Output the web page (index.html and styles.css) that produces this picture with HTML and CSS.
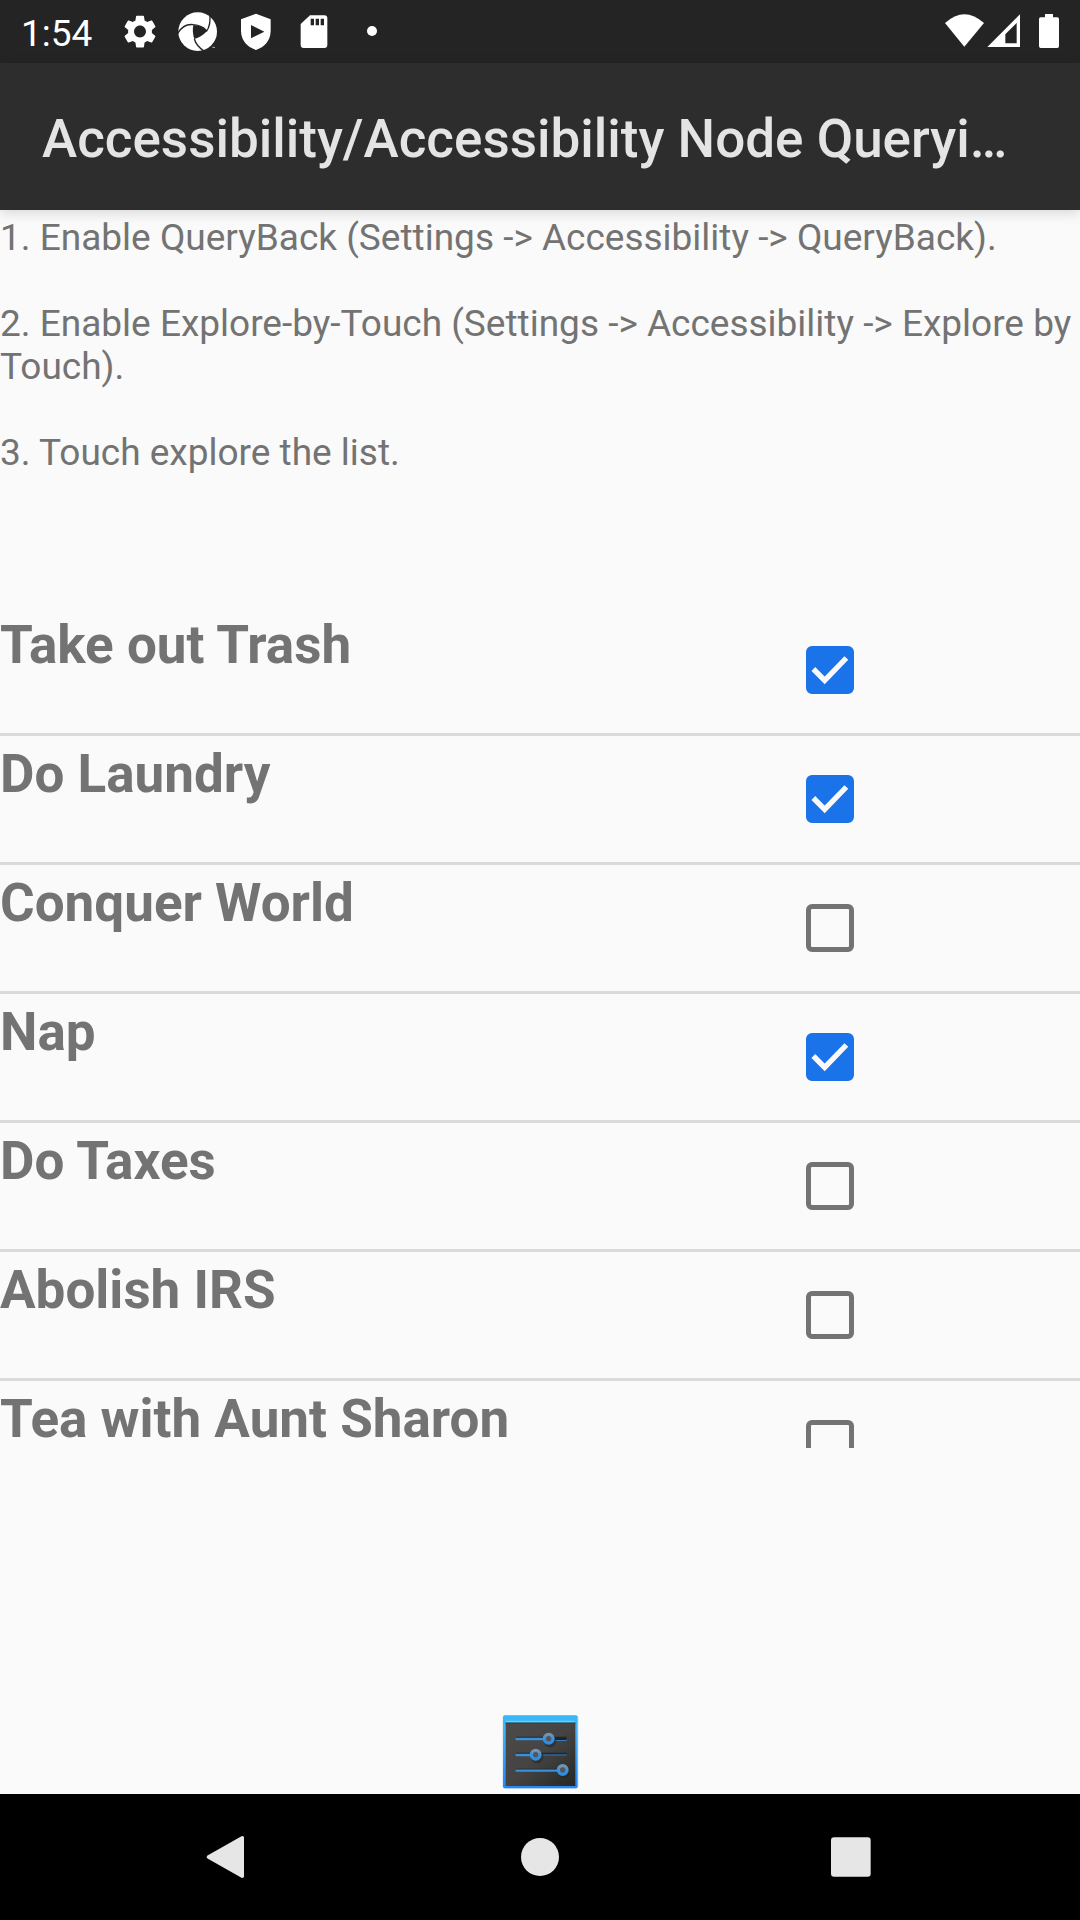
FILE: index.html
```html
<!DOCTYPE html>
<html lang="en">
<head>
<meta charset="utf-8">
<meta name="viewport" content="width=device-width, initial-scale=1">
<title>Accessibility/Accessibility Node Querying</title>
<link rel="stylesheet" href="styles.css">
</head>
<body>
<div class="status-bar">
  <span class="clock">1:54</span>
  <div class="notifications">
    <svg class="note-icon" viewBox="0 0 174 189" aria-hidden="true"><path transform="translate(27.500 35) scale(4.960)" fill="#fff" d="M19.140 12.940c.04-.3.06-.61.06-.94 0-.32-.02-.64-.07-.94l2.030-1.580c.18-.14.23-.41.12-.61l-1.920-3.320c-.12-.22-.37-.29-.59-.22l-2.390.96c-.5-.38-1.030-.7-1.620-.94l-.36-2.540c-.04-.24-.24-.41-.48-.41h-3.840c-.24 0-.43.17-.47.41l-.36 2.540c-.59.24-1.130.57-1.620.94l-2.390-.96c-.22-.08-.47 0-.59.22L2.740 8.870c-.12.21-.08.47.12.61l2.030 1.580c-.05.3-.09.63-.09.94s.02.64.07.94l-2.030 1.580c-.18.14-.23.41-.12.61l1.920 3.320c.12.22.37.29.59.22l2.390-.96c.5.38 1.030.7 1.620.94l.36 2.540c.05.24.24.41.48.41h3.840c.24 0 .44-.17.47-.41l.36-2.540c.59-.24 1.130-.56 1.620-.94l2.390.96c.22.08.47 0 .59-.22l1.920-3.320c.12-.22.07-.47-.12-.61l-2.010-1.580zM12 15.600c-1.980 0-3.600-1.620-3.600-3.600s1.620-3.600 3.600-3.600 3.600 1.620 3.600 3.600-1.620 3.600-3.600 3.600z"/></svg>
    <svg class="note-icon" viewBox="0 0 174 189" aria-hidden="true"><circle cx="86" cy="95" r="58" fill="#fff"/><path fill="#242424" d="M73 75Q95 76 111 88L112 95Q98 110 76 117Q69 97 73 75Z"/><path fill="none" stroke="#242424" stroke-width="4" d="M26 100Q44 70 73 74Q100 76 112 92M122 38Q127 75 112 95M106 154Q82 138 76 117"/><path stroke="#fff" stroke-width="2" d="M130 142h8"/></svg>
    <svg class="note-icon" viewBox="0 0 174 189" aria-hidden="true"><path fill="#fff" fill-rule="evenodd" d="M87 41L131 58V94Q129 135 87 150Q44 135 42 94V58ZM72 75V115L112 95Z"/></svg>
    <svg class="note-icon" viewBox="0 0 174 189" aria-hidden="true"><path fill="#fff" fill-rule="evenodd" d="M75 46H118Q127 46 127 55V135Q127 144 118 144H56Q47 144 47 135V72ZM77 56V76H87V56ZM92 56V76H102V56ZM107 56V76H117V56Z"/></svg>
    <svg class="note-icon" viewBox="0 0 174 189" aria-hidden="true"><circle cx="87" cy="93" r="15" fill="#fff"/></svg>
  </div>
  <svg class="system-icons" viewBox="0 0 360 189" aria-hidden="true"><g fill="#fff"><path d="M15 69Q73 16 132 69L73 140Z"/><path fill-rule="evenodd" d="M240 43V141H142ZM230 69L196 103V130H230Z"/><path d="M315 42H339V52H352Q357 52 357 57V138Q357 144 352 144H302Q297 144 297 138V57Q297 52 302 52H315Z"/></g></svg>
</div>
<header class="app-bar"><h1 class="app-title">Accessibility/Accessibility Node Querying</h1></header>
<main class="content">
  <section class="instructions">
    <p>1. Enable QueryBack (Settings -&gt; Accessibility -&gt; QueryBack).</p>
    <p>2. Enable Explore-by-Touch (Settings -&gt; Accessibility -&gt; Explore by Touch).</p>
    <p>3. Touch explore the list.</p>
  </section>
  <ul class="tasks">
    <li><label class="task"><span class="task-name">Take out Trash</span><input type="checkbox" class="tick" checked></label></li>
    <li><label class="task"><span class="task-name">Do Laundry</span><input type="checkbox" class="tick" checked></label></li>
    <li><label class="task"><span class="task-name">Conquer World</span><input type="checkbox" class="tick"></label></li>
    <li><label class="task"><span class="task-name">Nap</span><input type="checkbox" class="tick" checked></label></li>
    <li><label class="task"><span class="task-name">Do Taxes</span><input type="checkbox" class="tick"></label></li>
    <li><label class="task"><span class="task-name">Abolish IRS</span><input type="checkbox" class="tick"></label></li>
    <li><label class="task"><span class="task-name">Tea with Aunt Sharon</span><input type="checkbox" class="tick"></label></li>
  </ul>
  <div class="settings-area">
    <button type="button" class="settings" aria-label="Settings">
      <svg class="settings-icon" viewBox="0 0 252 252" aria-hidden="true">
        <defs>
          <linearGradient id="panel" x1="0" y1="0" x2="1" y2="1"><stop offset="0" stop-color="#4c4b49"/><stop offset=".5" stop-color="#454442"/><stop offset="1" stop-color="#252725"/></linearGradient>
          <linearGradient id="frame" x1="0" y1="0" x2="0" y2="1"><stop offset="0" stop-color="#35b9f7"/><stop offset=".2" stop-color="#45b4fa"/><stop offset="1" stop-color="#2586f5"/></linearGradient>
          <linearGradient id="knob" x1="0" y1="0" x2="0" y2="1"><stop offset="0" stop-color="#7394b8"/><stop offset=".5" stop-color="#3d92dc"/><stop offset="1" stop-color="#2b8de6"/></linearGradient>
        </defs>
        <rect x="13" y="16" width="229" height="221" rx="8" fill="#dce7f2"/>
        <rect x="15" y="16" width="224" height="219" rx="6" fill="url(#frame)"/>
        <path d="M24 34H230" stroke="#7fd3fb" stroke-width="3"/>
        <rect x="23" y="38" width="209" height="190" fill="url(#panel)"/>
        <path d="M23 40H232" stroke="#334552" stroke-width="4"/>
        <path d="M54 83H206M54 131H206M54 179H206" stroke="#1d2530" stroke-width="5"/>
        <path d="M135 135H206" stroke="#2b618e" stroke-width="5"/>
        <path d="M53 87H140M170 89H206M53 135H100M53 182H185" stroke="#3791dc" stroke-width="7"/>
        <path d="M170 87H206" stroke="#182333" stroke-width="6"/>
        <g fill="#252728" opacity=".6"><circle cx="156" cy="93" r="19"/><circle cx="117" cy="141" r="19"/><circle cx="197" cy="187" r="18"/></g>
        <g fill="#555" stroke="url(#knob)" stroke-width="10"><circle cx="152" cy="86" r="13"/><circle cx="113" cy="134" r="13"/><circle cx="194" cy="180" r="13"/></g>
      </svg>
    </button>
  </div>
</main>
<nav class="nav-bar">
  <button type="button" class="nav-button" aria-label="Back"><svg class="nav-icon" viewBox="0 0 240 240" aria-hidden="true"><path fill="#e6e6e6" stroke="#e6e6e6" stroke-width="10" stroke-linejoin="round" d="M64 120L166 62V178Z"/></svg></button>
  <button type="button" class="nav-button" aria-label="Home"><svg class="nav-icon" viewBox="0 0 240 240" aria-hidden="true"><circle cx="120" cy="120" r="57" fill="#e6e6e6"/></svg></button>
  <button type="button" class="nav-button" aria-label="Recent apps"><svg class="nav-icon" viewBox="0 0 240 240" aria-hidden="true"><rect x="54" y="61" width="119" height="118" rx="9" fill="#e6e6e6"/></svg></button>
</nav>
</body>
</html>
```
FILE: styles.css
```css
* {
  box-sizing: border-box;
}

body {
  display: flex;
  flex-direction: column;
  height: 100vh;
  margin: 0;
  background: #fafafa;
  color: #737373;
  font-family: Roboto, sans-serif;
}

button {
  padding: 0;
  border: 0;
  background: none;
}

svg {
  display: block;
}

.status-bar {
  display: flex;
  flex: none;
  align-items: center;
  height: 63px;
  padding-left: 21px;
  background: #242424;
  color: #fff;
}

.clock {
  width: 90px;
  padding-top: 3px;
  font-size: 37px;
  line-height: 43px;
}

.notifications {
  display: flex;
  flex: 1;
}

.note-icon {
  width: 58px;
  height: 63px;
}

.system-icons {
  width: 120px;
  height: 63px;
  margin-right: 20px;
}

.app-bar {
  position: relative;
  display: flex;
  flex: none;
  align-items: center;
  height: 147px;
  padding: 4px 64px 0 42px;
  background: #2d2d2d;
  box-shadow: 0 3px 12px rgba(0, 0, 0, 0.14);
}

.app-title {
  flex: 1;
  min-width: 0;
  margin: 0;
  overflow: hidden;
  color: #e4e4e4;
  font-size: 53px;
  font-weight: 500;
  line-height: 62px;
  text-overflow: ellipsis;
  white-space: nowrap;
}

.content {
  display: flex;
  flex: 1;
  flex-direction: column;
  min-height: 0;
}

.instructions {
  flex: none;
  padding: 6px 0 133px;
  font-size: 37px;
  line-height: 43px;
}

.instructions p {
  margin: 0;
}

.instructions p + p {
  margin-top: 43px;
}

.tasks {
  flex: 1;
  min-height: 0;
  margin: 0;
  padding: 0;
  overflow: hidden;
  list-style: none;
}

.tasks li + li {
  border-top: 3px solid #dadada;
}

.task {
  display: grid;
  grid-template-columns: 73% 84px;
  height: 126px;
}

.task-name {
  padding-top: 7px;
  font-size: 53px;
  font-weight: 700;
  line-height: 62px;
}

.tick {
  place-self: center;
  width: 48px;
  height: 48px;
  margin: 0;
  border: 5px solid #737373;
  border-radius: 6px;
  appearance: none;
}

.tick:checked {
  border-color: #1a73e8;
  background: #1a73e8 url("data:image/svg+xml,%3Csvg xmlns='http://www.w3.org/2000/svg' viewBox='0 0 144 144'%3E%3Cpath d='M22 69L56 103L121 36' fill='none' stroke='%23fafafa' stroke-width='16'/%3E%3C/svg%3E") border-box center / 48px 48px no-repeat;
}

.settings-area {
  display: flex;
  flex: none;
  align-items: flex-end;
  justify-content: center;
  height: 346px;
}

.settings-icon {
  width: 84px;
  height: 84px;
}

.nav-bar {
  display: flex;
  flex: none;
  height: 126px;
  padding: 0 70px;
  background: #000;
}

.nav-button {
  display: flex;
  flex: 1;
  align-items: center;
  justify-content: center;
}

.nav-icon {
  width: 80px;
  height: 80px;
}
```
